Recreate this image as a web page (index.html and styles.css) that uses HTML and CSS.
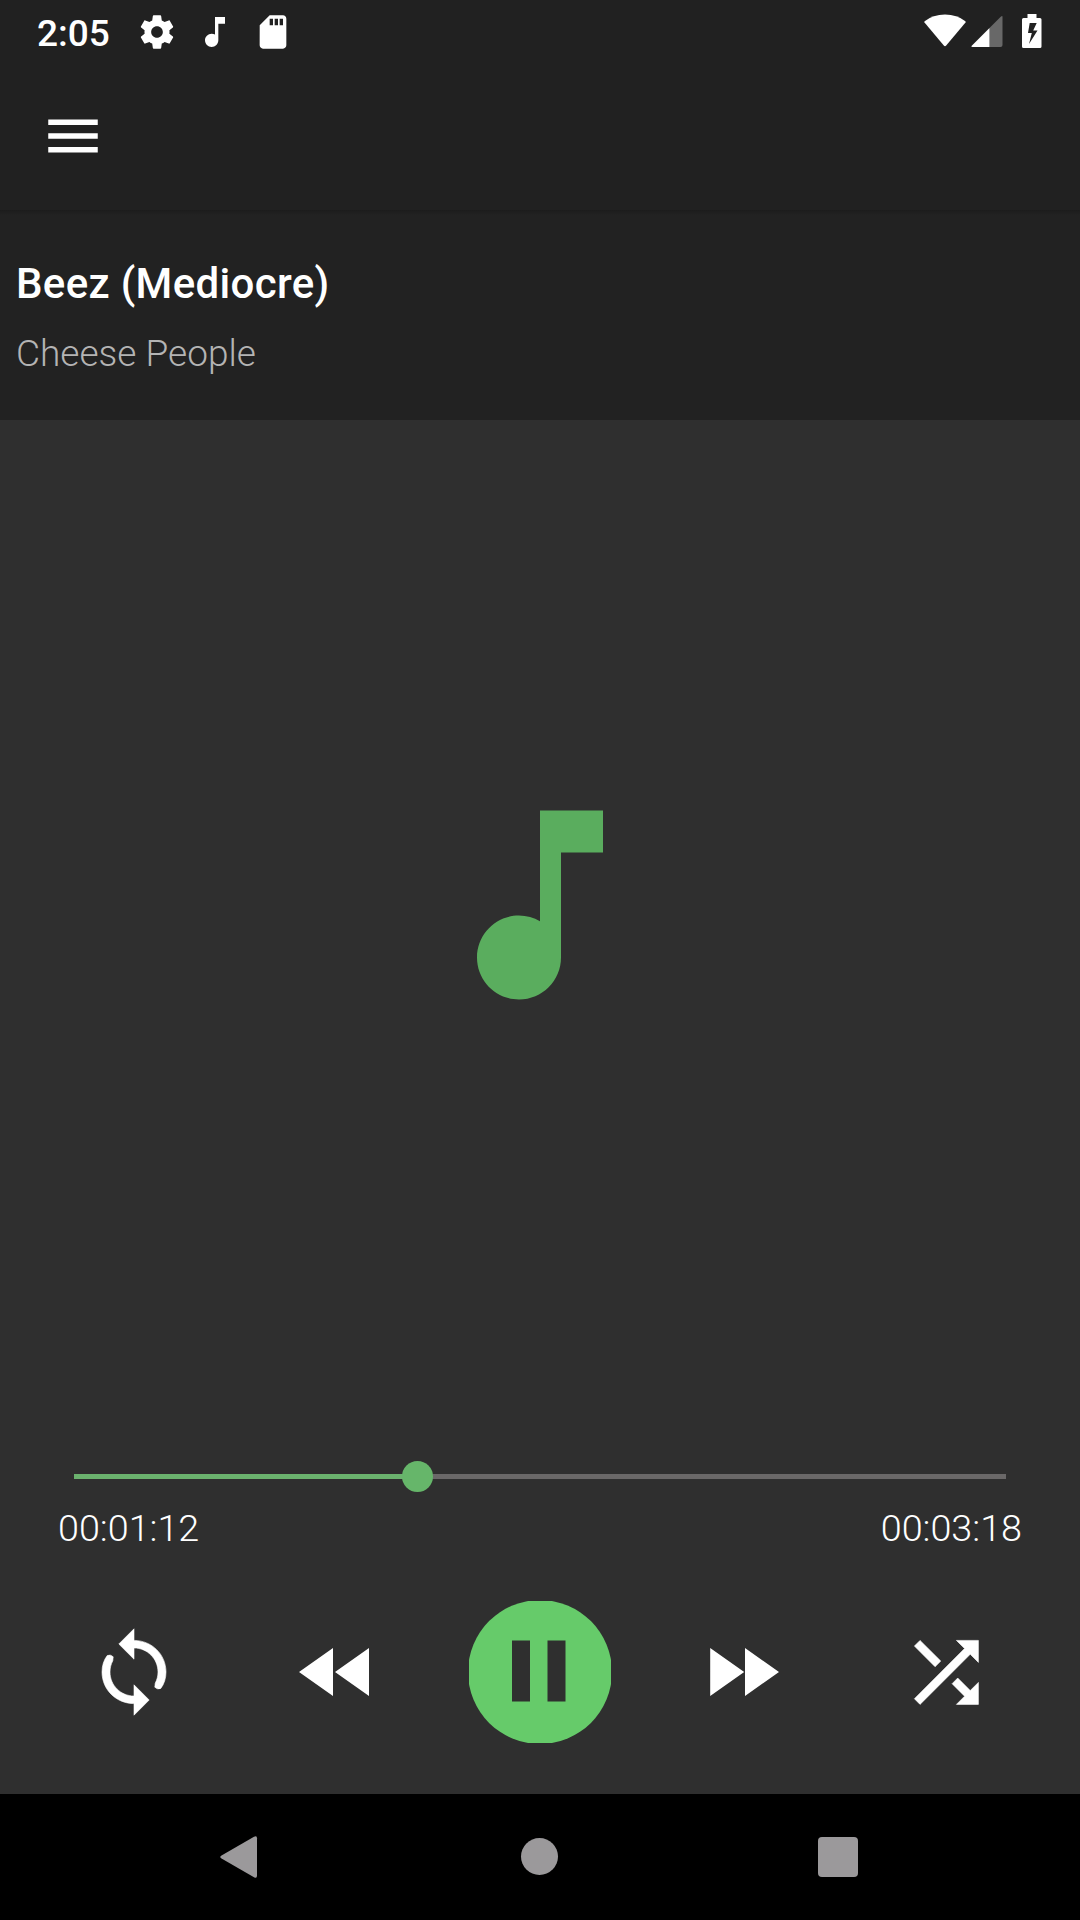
FILE: index.html
```html
<!DOCTYPE html>
<html lang="en">

<head>
    <meta charset="UTF-8">
    <meta name="viewport" content="width=device-width, initial-scale=1.0">
    <title>Music Player</title>
    <link rel="stylesheet" href="styles.css">
</head>

<body>
    <div class="status-bar">
        <div class="status-left">
            <span class="clock">2:05</span>
            <svg class="status-icon" viewBox="0 0 24 24">
                <path d="M19.43 12.98c.04-.32.07-.64.07-.98s-.03-.66-.07-.98l2.11-1.65c.19-.15.24-.42.12-.64l-2-3.46c-.12-.22-.39-.3-.61-.22l-2.49 1c-.52-.4-1.08-.73-1.69-.98l-.38-2.65C14.46 2.18 14.25 2 14 2h-4c-.25 0-.46.18-.49.42l-.38 2.65c-.61.25-1.17.59-1.69.98l-2.49-1c-.23-.09-.49 0-.61.22l-2 3.46c-.13.22-.07.49.12.64l2.11 1.65c-.04.32-.07.65-.07.98s.03.66.07.98l-2.11 1.65c-.19.15-.24.42-.12.64l2 3.46c.12.22.39.3.61.22l2.49-1c.52.4 1.08.73 1.69.98l.38 2.65c.03.24.24.42.49.42h4c.25 0 .46-.18.49-.42l.38-2.65c.61-.25 1.17-.59 1.69-.98l2.49 1c.23.09.49 0 .61-.22l2-3.46c.12-.22.07-.49-.12-.64l-2.11-1.65zM12 15.5c-1.93 0-3.5-1.57-3.5-3.5s1.57-3.5 3.5-3.5 3.5 1.57 3.5 3.5-1.57 3.5-3.5 3.5z"/>
            </svg>
            <svg class="status-icon" viewBox="0 0 24 24">
                <path d="M12 3v10.55c-.59-.34-1.27-.55-2-.55-2.21 0-4 1.79-4 4s1.79 4 4 4 4-1.79 4-4V7h4V3h-6z"/>
            </svg>
            <svg class="status-icon" viewBox="0 0 24 24">
                <path d="M18 2h-8L4.02 8 4 20c0 1.1.9 2 2 2h12c1.1 0 2-.9 2-2V4c0-1.1-.9-2-2-2zm-6 6h-2V4h2v4zm3 0h-2V4h2v4zm3 0h-2V4h2v4z"/>
            </svg>
        </div>
        <div class="status-right">
            <svg class="wifi" viewBox="0 0 42 34">
                <path d="M.6 7.3Q9 .6 21 .6t20.400 6.700q.6.600.100 1.300L22.200 31.600q-1.200 1.300-2.400 0L.5 8.600Q0 7.900.6 7.300z"/>
            </svg>
            <svg class="signal" viewBox="0 0 32 34">
                <path class="dim" d="M18.500 14L30 2.500q1.500-1.200 1.500.5v28q0 2-2 2h-11z"/>
                <path d="M18.500 14v19H1.500Q-.5 33 1 31.500z"/>
            </svg>
            <svg class="battery" viewBox="0 0 20 34">
                <path fill-rule="evenodd" d="M5.500 0h9v4h3.500q1.500 0 1.500 1.500v27q0 1.500-1.500 1.500h-16.500q-1.500 0-1.500-1.500v-27q0-1.500 1.500-1.500h4zM7.700 9l-1.700 10h3.800l-2.800 11 8.500-13.500h-4.300l3.500-7.500z"/>
            </svg>
        </div>
    </div>

    <div class="toolbar">
        <svg class="menu-icon" viewBox="0 0 24 24">
            <path d="M3 18h18v-2H3v2zm0-5h18v-2H3v2zm0-7v2h18V6H3z"/>
        </svg>
    </div>

    <div class="song-info">
        <div class="title">Beez (Mediocre)</div>
        <div class="artist">Cheese People</div>
    </div>

    <div class="cover">
        <svg class="cover-icon" viewBox="0 0 24 24">
            <path d="M12 3v10.55c-.59-.34-1.27-.55-2-.55-2.21 0-4 1.79-4 4s1.79 4 4 4 4-1.79 4-4V7h4V3h-6z"/>
        </svg>
    </div>

    <div class="seek">
        <div class="track">
            <div class="progress" style="width: 36.8%"></div>
            <div class="thumb"></div>
        </div>
        <div class="times">
            <span>00:01:12</span>
            <span>00:03:18</span>
        </div>
    </div>

    <div class="controls">
        <div class="control">
            <svg class="control-icon thick" viewBox="0 0 24 24">
                <path d="M12 4.100V1.200L8.200 5l3.800 3.800V6c3.310 0 6 2.690 6 6 0 1.010-.25 1.970-.7 2.800l-.1 1q.7.700 1.500.3C19.540 15.030 20 13.570 20 12c0-4.420-3.580-7.900-8-7.900zm0 13.900c-3.310 0-6-2.690-6-6 0-1.010.25-1.970.7-2.800l.1-1q-.7-.7-1.500-.3C4.460 8.970 4 10.430 4 12c0 4.420 3.580 7.900 8 7.900v2.900l3.800-3.800-3.800-3.800v2.800z"/>
            </svg>
        </div>
        <div class="control">
            <svg class="control-icon" viewBox="0 0 24 24">
                <path d="M11 18V6l-8.500 6 8.500 6zm.5-6l8.500 6V6l-8.500 6z"/>
            </svg>
        </div>
        <div class="control">
            <svg class="pause-icon" viewBox="0 0 142 142">
                <circle cx="71" cy="71" r="72"/>
                <path d="M43 39.500h18v61h-18zM78.500 39.500h18v61h-18z"/>
            </svg>
        </div>
        <div class="control">
            <svg class="control-icon" viewBox="0 0 24 24">
                <path d="M3.800 18l8.500-6-8.500-6v12zm8.700-12v12l8.500-6-8.500-6z"/>
            </svg>
        </div>
        <div class="control">
            <svg class="control-icon thick" viewBox="0 0 24 24">
                <path d="M10.690 9.270L5.510 4.100 4.100 5.510l5.170 5.170 1.420-1.410zM14.600 4.100l2.040 2.040L4.100 18.690 5.510 20.100 18.060 7.560l2.040 2.040V4.100h-5.500zm.33 9.410l-1.410 1.410 3.130 3.130L14.600 20.100h5.500v-5.500l-2.040 2.040-3.130-3.130z"/>
            </svg>
        </div>
    </div>

    <div class="nav-bar">
        <svg class="nav-icon" viewBox="0 0 42 42">
            <path d="M3.500 19.500L36 .8q3-1.500 3 1.500v37.400q0 3-3 1.500L3.500 22.500q-2.500-1.500 0-3z"/>
        </svg>
        <svg class="nav-icon" viewBox="0 0 42 42">
            <circle cx="21.500" cy="20.500" r="18.500"/>
        </svg>
        <svg class="nav-icon" viewBox="0 0 42 42">
            <rect x="1" y="1" width="40" height="40" rx="4"/>
        </svg>
    </div>
</body>

</html>
```

FILE: styles.css
```css
* {
    box-sizing: border-box;
}

body {
    display: flex;
    flex-direction: column;
    height: 1920px;
    margin: 0;
    background-color: #2f2f2f;
    color: white;
    font-family: Roboto, sans-serif;
}

svg {
    display: block;
    fill: white;
}

/* Status bar */
.status-bar {
    display: flex;
    justify-content: space-between;
    height: 63px;
    padding: 0 38px 0 37px;
    background-color: #212121;
}

.status-left {
    display: flex;
    align-items: center;
    gap: 18px;
}

.clock {
    width: 82px;
    font-size: 37px;
    font-weight: 500;
    line-height: 40px;
    padding-top: 4px;
}

.status-icon {
    width: 40px;
    height: 40px;
}

.status-right {
    display: flex;
    padding-top: 14px;
}

.wifi {
    width: 42px;
    height: 34px;
}

.signal {
    width: 32px;
    height: 34px;
    margin: 0 19px 0 5px;
}

.dim {
    fill: #686868;
}

.battery {
    width: 20px;
    height: 34px;
}

/* Toolbar */
.toolbar {
    display: flex;
    align-items: center;
    height: 147px;
    padding: 0 0 2px 40px;
    background-color: #212121;
}

.menu-icon {
    width: 66px;
    height: 68px;
}

.song-info {
    height: 210px;
    padding: 49px 16px 0;
    background: linear-gradient(#1c1c1c, #222222 5px);
}

.title {
    font-size: 42px;
    font-weight: 500;
    letter-spacing: 0.33px;
    line-height: 50px;
}

.artist {
    margin-top: 22px;
    color: #b4b4b4;
    font-size: 37px;
    font-weight: 300;
    line-height: 46px;
}

.cover {
    display: flex;
    justify-content: center;
    align-items: center;
    height: 969px;
}

.cover-icon {
    width: 252px;
    height: 252px;
    fill: #5aad5e;
}

/* Seek bar */
.seek {
    height: 212px;
    padding: 85px 58px 0;
}

.track {
    display: flex;
    align-items: center;
    height: 5px;
    margin: 0 16px;
    background-color: #6a6868;
}

.progress {
    height: 5px;
    background-color: #6bb26e;
}

.thumb {
    flex-shrink: 0;
    width: 31px;
    height: 31px;
    margin-left: -15px;
    border-radius: 50%;
    background-color: #66b66a;
}

.times {
    display: flex;
    justify-content: space-between;
    margin-top: 26px;
    font-size: 37.7px;
    font-weight: 300;
    line-height: 46px;
}

/* Playback buttons */
.controls {
    display: flex;
    height: 193px;
    padding: 0 32px;
}

.control {
    display: flex;
    flex: 1;
    justify-content: center;
    align-items: center;
    height: 142px;
}

.control-icon {
    width: 96px;
    height: 96px;
}

.thick {
    stroke: white;
    stroke-width: 0.15;
}

.pause-icon {
    width: 142px;
    height: 142px;
}

.pause-icon circle {
    fill: #66cb6a;
}

.pause-icon path {
    fill: #2f2f2f;
}

/* System navigation */
.nav-bar {
    display: flex;
    justify-content: space-between;
    align-items: center;
    height: 126px;
    padding: 0 221px 0 218px;
    background-color: black;
}

.nav-icon {
    width: 42px;
    height: 42px;
    fill: #9b999b;
}
```
